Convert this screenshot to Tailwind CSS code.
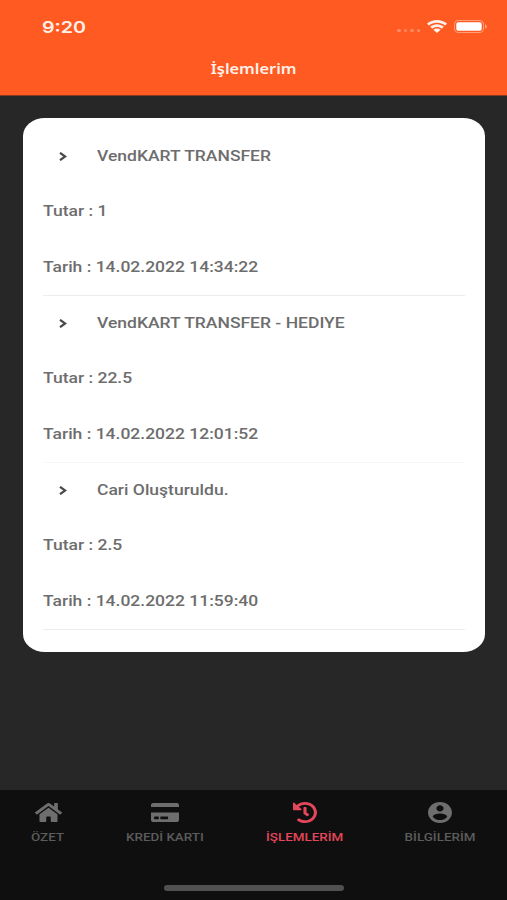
<!DOCTYPE html>
<html lang="tr">
<head>
  <meta charset="UTF-8">
  <meta name="viewport" content="width=device-width, initial-scale=1">
  <title>İşlemlerim</title>
  <script src="https://cdn.jsdelivr.net/npm/@tailwindcss/browser@4"></script>
</head>
<body class="h-[900px] flex flex-col bg-[#272727] font-[Roboto,sans-serif] overflow-hidden">
  <header class="h-24 shrink-0 bg-[#ff5a22] border-b border-[#8a3a20] text-[#fff1ea]">
    <!-- status bar -->
    <div class="h-[53px] flex items-center justify-between pl-[42px] pr-5">
      <span class="inline-block origin-left scale-x-[1.23] font-[Inter,sans-serif] font-semibold text-[16px] whitespace-nowrap">9:20</span>
      <div class="flex items-center">
        <div class="flex gap-[3px] mr-[7px] mt-2">
          <span class="w-[3.5px] h-[3px] rounded-full bg-white/30"></span>
          <span class="w-[3.5px] h-[3px] rounded-full bg-white/30"></span>
          <span class="w-[3.5px] h-[3px] rounded-full bg-white/30"></span>
          <span class="w-[3.5px] h-[3px] rounded-full bg-white/30"></span>
        </div>
        <svg class="w-5 h-[13px] mr-[7px]" viewBox="0 0 20 13" fill="currentColor">
          <path d="M10 0C6.200 0 2.700 1.300 0 3.500l1.900 2C4.100 3.700 6.900 2.700 10 2.700s5.900 1 8.100 2.800l1.900-2C17.300 1.300 13.800 0 10 0z"/>
          <path d="M10 4.200c-2.600 0-5 .9-6.800 2.400l2 2.100C6.500 7.600 8.200 7 10 7s3.500.6 4.800 1.700l2-2.100C15 5.100 12.600 4.200 10 4.200z"/>
          <path d="M10 8.400c-1.400 0-2.600.5-3.600 1.300L10 13l3.600-3.300c-1-.8-2.200-1.300-3.600-1.300z"/>
        </svg>
        <svg class="w-[33px] h-[13px]" viewBox="0 0 33 13">
          <rect x=".5" y=".5" width="29" height="12" rx="3.500" fill="none" stroke="#fff" stroke-opacity=".4"/>
          <rect x="2.300" y="2.300" width="25.400" height="8.400" rx="1.800" fill="#fff"/>
          <path d="M31 4.200v4.600c1-.4 1.800-1.200 1.800-2.300S32 4.600 31 4.200z" fill="#fff" fill-opacity=".45"/>
        </svg>
      </div>
    </div>
    <h1 class="h-[30px] flex items-center justify-center"><span class="inline-block scale-x-[1.17] font-['Noto_Sans',sans-serif] font-semibold text-[14px] whitespace-nowrap">İşlemlerim</span></h1>
  </header>

  <main class="flex-1 pt-[22px] pl-[23px] pr-[22px]">
    <div class="h-[534px] bg-white rounded-[22px/18px] pt-[11px] px-5 text-[14px] font-medium text-[#6d6d6d] whitespace-nowrap">
      <section class="h-[167px] border-b border-[#ededed]">
        <div class="h-[55.3px] flex items-center">
          <svg class="w-2 h-[9px] ml-4 mr-[30px]" viewBox="0 0 8 9" fill="none" stroke="#4a4a4a" stroke-width="2.200"><path d="M1 .8 6.200 4.500 1 8.200"/></svg>
          <span class="inline-block origin-left scale-x-[1.25]">VendKART TRANSFER</span>
        </div>
        <div class="h-[55.3px] flex items-center"><span class="inline-block origin-left scale-x-[1.25]">Tutar : 1</span></div>
        <div class="h-[55.3px] flex items-center"><span class="inline-block origin-left scale-x-[1.25]">Tarih : 14.02.2022 14:34:22</span></div>
      </section>
      <section class="h-[167px] border-b border-[#f7f7f7]">
        <div class="h-[55.3px] flex items-center">
          <svg class="w-2 h-[9px] ml-4 mr-[30px]" viewBox="0 0 8 9" fill="none" stroke="#4a4a4a" stroke-width="2.200"><path d="M1 .8 6.200 4.500 1 8.200"/></svg>
          <span class="inline-block origin-left scale-x-[1.25]">VendKART TRANSFER - HEDIYE</span>
        </div>
        <div class="h-[55.3px] flex items-center"><span class="inline-block origin-left scale-x-[1.25]">Tutar : 22.5</span></div>
        <div class="h-[55.3px] flex items-center"><span class="inline-block origin-left scale-x-[1.25]">Tarih : 14.02.2022 12:01:52</span></div>
      </section>
      <section class="h-[167px] border-b border-[#ededed]">
        <div class="h-[55.3px] flex items-center">
          <svg class="w-2 h-[9px] ml-4 mr-[30px]" viewBox="0 0 8 9" fill="none" stroke="#4a4a4a" stroke-width="2.200"><path d="M1 .8 6.200 4.500 1 8.200"/></svg>
          <span class="inline-block origin-left scale-x-[1.25]">Cari Oluşturuldu.</span>
        </div>
        <div class="h-[55.3px] flex items-center"><span class="inline-block origin-left scale-x-[1.25]">Tutar : 2.5</span></div>
        <div class="h-[55.3px] flex items-center"><span class="inline-block origin-left scale-x-[1.25]">Tarih : 14.02.2022 11:59:40</span></div>
      </section>
    </div>
  </main>

  <footer class="h-[110px] shrink-0 bg-[#0f0f0f] flex flex-col items-center justify-between pb-[9px]">
    <nav class="w-full flex justify-between pt-3 px-[31px] text-[11px] leading-[14px] font-medium text-[#5c5c5c] whitespace-nowrap">
      <a class="w-[34px] flex flex-col items-center gap-2">
        <svg class="w-[27px] h-[21px] py-px shrink-0 text-[#6e6e6e]" viewBox="0 32 576 448" preserveAspectRatio="none" fill="currentColor"><path d="M280.370 148.260L96 300.110V464a16 16 0 0 0 16 16l112.060-.29a16 16 0 0 0 15.920-16V368a16 16 0 0 1 16-16h64a16 16 0 0 1 16 16v95.640a16 16 0 0 0 16 16.050L464 480a16 16 0 0 0 16-16V300L295.670 148.260a12.190 12.190 0 0 0-15.300 0zM571.600 251.470L488 182.560V44.050a12 12 0 0 0-12-12h-56a12 12 0 0 0-12 12v72.610L318.470 43a48 48 0 0 0-61 0L4.340 251.470a12 12 0 0 0-1.600 16.900l25.500 31A12 12 0 0 0 45.150 301l235.220-193.740a12.190 12.190 0 0 1 15.300 0L530.900 301a12 12 0 0 0 16.900-1.600l25.500-31a12 12 0 0 0-1.700-16.930z"/></svg>
        <span class="inline-block scale-x-[1.22]">ÖZET</span>
      </a>
      <a class="w-[78px] flex flex-col items-center gap-2">
        <svg class="w-7 h-[21px] py-px shrink-0 text-[#6e6e6e]" viewBox="0 32 576 448" preserveAspectRatio="none" fill="currentColor"><path d="M0 432c0 26.500 21.500 48 48 48h480c26.500 0 48-21.500 48-48V256H0v176zm192-68c0-6.600 5.400-12 12-12h136c6.600 0 12 5.400 12 12v40c0 6.600-5.400 12-12 12H204c-6.600 0-12-5.400-12-12v-40zm-128 0c0-6.600 5.400-12 12-12h72c6.600 0 12 5.400 12 12v40c0 6.600-5.400 12-12 12H76c-6.600 0-12-5.400-12-12v-40zM576 80v48H0V80c0-26.500 21.500-48 48-48h480c26.500 0 48 21.500 48 48z"/></svg>
        <span class="inline-block scale-x-[1.22]">KREDİ KARTI</span>
      </a>
      <a class="w-[78px] flex flex-col items-center gap-2 text-[#e4475a]">
        <svg class="w-6 h-[21px] shrink-0" viewBox="8 8 496 496" preserveAspectRatio="none" fill="currentColor"><path d="M504 255.531c.253 136.640-111.180 248.372-247.820 248.468-59.015.042-113.223-20.530-155.822-54.911-11.077-8.940-11.905-25.541-1.839-35.607l11.267-11.267c8.609-8.609 22.353-9.551 31.891-1.984C173.062 425.135 212.781 440 256 440c101.705 0 184-82.311 184-184 0-101.705-82.311-184-184-184-48.814 0-93.149 18.969-126.068 49.932l50.754 50.754c10.080 10.080 2.941 27.314-11.313 27.314H24c-8.837 0-16-7.163-16-16V38.627c0-14.254 17.234-21.393 27.314-11.314l49.372 49.372C129.209 34.136 189.552 8 256 8c136.810 0 247.747 110.780 248 247.531zm-180.912 78.784l9.823-12.630c8.138-10.463 6.253-25.542-4.210-33.679L288 256.349V152c0-13.255-10.745-24-24-24h-16c-13.255 0-24 10.745-24 24v135.651l65.409 50.874c10.463 8.137 25.541 6.253 33.679-4.210z"/></svg>
        <span class="inline-block scale-x-[1.22]">İŞLEMLERİM</span>
      </a>
      <a class="w-[71px] flex flex-col items-center gap-2">
        <svg class="w-6 h-[21px] shrink-0 text-[#6e6e6e]" viewBox="2 2 20 20" preserveAspectRatio="none" fill="currentColor"><path d="M12 2C6.480 2 2 6.480 2 12s4.480 10 10 10 10-4.480 10-10S17.520 2 12 2zm0 3c1.660 0 3 1.340 3 3s-1.340 3-3 3-3-1.340-3-3 1.340-3 3-3zm0 14.200c-2.500 0-4.710-1.280-6-3.220.03-1.990 4-3.080 6-3.080 1.990 0 5.970 1.090 6 3.080-1.290 1.940-3.500 3.220-6 3.220z"/></svg>
        <span class="inline-block scale-x-[1.22]">BİLGİLERİM</span>
      </a>
    </nav>
    <!-- home indicator -->
    <div class="w-[180px] h-[6px] rounded-full bg-[#505050]"></div>
  </footer>
</body>
</html>
